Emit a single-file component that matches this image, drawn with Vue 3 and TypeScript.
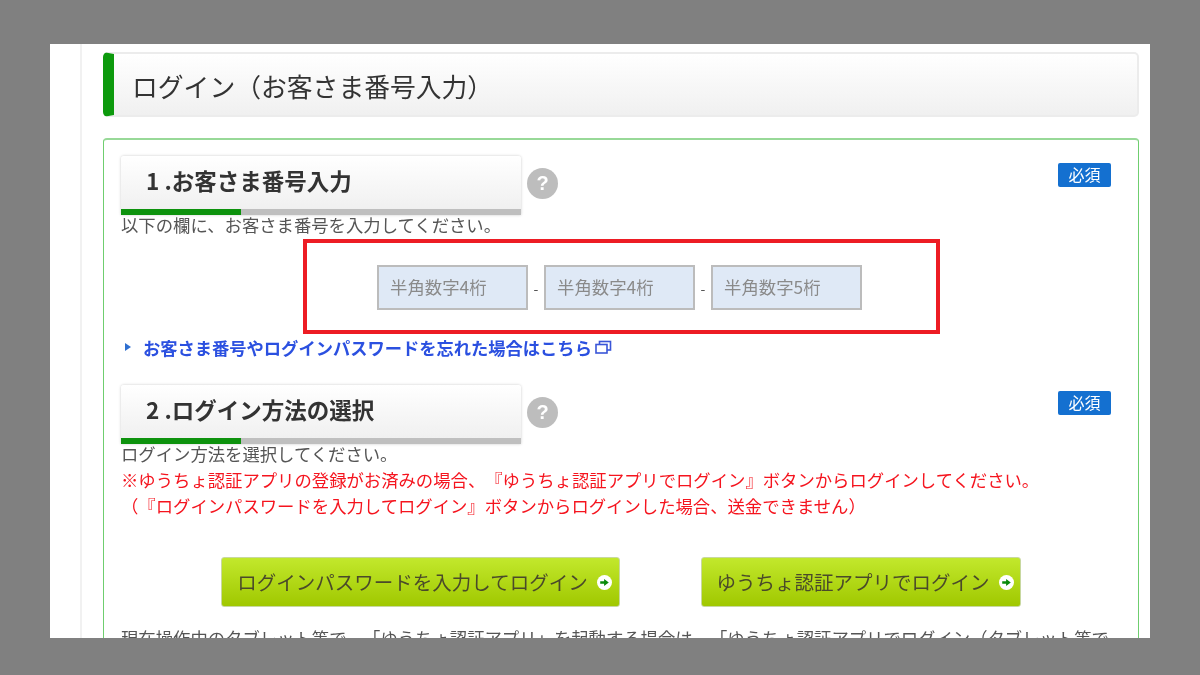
<script setup lang="ts">
interface Field { ph: string }
const fields: Field[] = [{ ph: '半角数字4桁' }, { ph: '半角数字4桁' }, { ph: '半角数字5桁' }]
</script>

<template>
  <div class="stage">
    <div class="page">
      <div class="col">
        <h1 class="title">ログイン（お客さま番号入力）</h1>
        <div class="panel">
          <div class="sec-row">
            <h2 class="sec-head"><span class="sec-text">1 .お客さま番号入力</span></h2>
            <span class="help">?</span>
            <span class="req">必須</span>
          </div>
          <p class="txt">以下の欄に、お客さま番号を入力してください。</p>
          <div class="redbox">
            <template v-for="(f, i) in fields" :key="i">
              <span v-if="i > 0" class="dash">-</span>
              <div class="field">{{ f.ph }}</div>
            </template>
          </div>
          <div class="link-row">
            <svg class="tri" width="6" height="8" viewBox="0 0 6 8"><path d="M0 0L6 4L0 8Z" fill="#2f6fd0" /></svg>
            <a class="link">お客さま番号やログインパスワードを忘れた場合はこちら</a>
            <svg class="ext" width="17" height="14" viewBox="0 0 17 14" fill="none" stroke="#3a55d8" stroke-width="1.6"><rect x="4.5" y="1.5" width="11" height="8.5" /><rect x="1" y="4.5" width="11" height="8.5" fill="#fff" /></svg>
          </div>
          <div class="sec-row second">
            <h2 class="sec-head"><span class="sec-text">2 .ログイン方法の選択</span></h2>
            <span class="help">?</span>
            <span class="req">必須</span>
          </div>
          <p class="txt">ログイン方法を選択してください。</p>
          <p class="red l1">※ゆうちょ認証アプリの登録がお済みの場合、『ゆうちょ認証アプリでログイン』ボタンからログインしてください。</p>
          <p class="red l2">（『ログインパスワードを入力してログイン』ボタンからログインした場合、送金できません）</p>
          <div class="btns">
            <button class="btn b1">ログインパスワードを入力してログイン<span class="go"><svg width="11" height="9" viewBox="0 0 11 9"><path d="M0 3H5V0L11 4.5L5 9V6H0Z" fill="#0a8a0a" /></svg></span></button>
            <button class="btn b2">ゆうちょ認証アプリでログイン<span class="go"><svg width="11" height="9" viewBox="0 0 11 9"><path d="M0 3H5V0L11 4.5L5 9V6H0Z" fill="#0a8a0a" /></svg></span></button>
          </div>
          <p class="txt foot">現在操作中のタブレット等で、「ゆうちょ認証アプリ」を起動する場合は、「ゆうちょ認証アプリでログイン（タブレット等で</p>
        </div>
      </div>
    </div>
  </div>
</template>

<style>
html, body { margin: 0; background: #808080; }
</style>

<style scoped>
.stage {
  width: 1200px;
  height: 675px;
  box-sizing: border-box;
  padding: 44px 50px 37px;
  background: #808080;
  font-family: "Noto Sans CJK JP", "Liberation Sans", sans-serif;
  text-spacing-trim: space-all;
  overflow: hidden;
}
.page {
  height: 594px;
  background: #fff;
  padding-left: 30px;
  overflow: hidden;
  filter: blur(0.55px);
}
.col {
  border-left: 2px solid #f1f1f1;
  padding: 8px 11px 0 21px;
  height: 100%;
  box-sizing: border-box;
}
.title {
  margin: 0;
  height: 65px;
  box-sizing: border-box;
  border: 2px solid #ececec;
  border-left: 11px solid #0d9a0d;
  border-radius: 5px;
  background: linear-gradient(#fff, #f0f0f0);
  padding-left: 18px;
  font-size: 25.8px;
  font-weight: 400;
  line-height: 63px;
  color: #333;
  white-space: nowrap;
}
.panel {
  margin-top: 21px;
  border: 1px solid #6fce6f;
  border-top: 2px solid #98d998;
  border-radius: 4px;
  padding: 16px 27px 0 17px;
  height: 520px;
  box-sizing: border-box;
  position: relative;
}
.sec-row {
  display: flex;
  align-items: flex-start;
}
.sec-row.second { margin-top: 25px; }
.sec-head {
  margin: 0;
  width: 400px;
  height: 59px;
  box-sizing: border-box;
  border-radius: 3px 3px 0 0;
  background: linear-gradient(#fff, #f0f0f0);
  box-shadow: 0 0 3px rgba(0, 0, 0, .22);
  border-bottom: 6px solid #bfbfbf;
  position: relative;
  padding-left: 25px;
  font-size: 22.5px;
  font-weight: 700;
  line-height: 49px;
  color: #333;
  white-space: nowrap;
}
.sec-head::after {
  content: "";
  position: absolute;
  left: 0;
  bottom: -6px;
  width: 120px;
  height: 6px;
  background: #0d920d;
}
.help {
  width: 31px;
  height: 31px;
  margin: 12px 0 0 6px;
  border-radius: 50%;
  background: #bdbdbd;
  color: #fff;
  font: 700 20px/31px "Liberation Sans", sans-serif;
  text-align: center;
}
.req {
  margin: 7px 0 0 auto;
  width: 53px;
  height: 24px;
  border-radius: 2px;
  background: #1470d0;
  color: #fff;
  font-size: 16px;
  line-height: 23px;
  text-align: center;
}
.second .req { margin-top: 6px; }
.txt, .red {
  margin: -2px 0 0;
  font-size: 17.35px;
  line-height: 23px;
  color: #555;
  white-space: nowrap;
}
.red { color: #f5141e; line-height: 26px; margin: 0; }
.l1 { margin-top: 2px; }
.redbox {
  margin: 3px 0 0 182px;
  width: 637px;
  height: 95px;
  box-sizing: border-box;
  border: 4px solid #ed1c24;
  display: flex;
  align-items: center;
  padding-left: 70px;
  padding-top: 2px;
}
.field {
  width: 151px;
  height: 45px;
  box-sizing: border-box;
  border: 2px solid #bcbcbc;
  background: #dfe9f6;
  color: #8a8a8a;
  font-size: 17.4px;
  line-height: 39px;
  padding-left: 11px;
}
.dash {
  width: 16px;
  text-align: center;
  color: #555;
  font-size: 14px;
}
.link-row {
  display: flex;
  align-items: center;
  height: 26px;
  padding-left: 4px;
}
.tri { margin-right: 12px; }
.link {
  font-size: 17.27px;
  font-weight: 700;
  color: #2b50e0;
  white-space: nowrap;
}
.ext { margin-left: 3px; }
.btns {
  display: flex;
  margin: 38px 0 0 100px;
  gap: 81px;
}
.btn {
  height: 50px;
  box-sizing: border-box;
  border: 1px solid #c8d8a0;
  border-radius: 3px;
  background: linear-gradient(#c2e82c, #a0c800);
  color: #4a4a2a;
  font: 400 19.5px/46px "Noto Sans CJK JP", sans-serif;
  display: flex;
  align-items: center;
  justify-content: center;
  padding: 0 0 0 8px;
  white-space: nowrap;
}
.b1 { width: 399px; }
.b2 { width: 320px; }
.go {
  width: 15px;
  height: 15px;
  margin-left: 9px;
  border-radius: 50%;
  background: #fff;
  display: flex;
  align-items: center;
  justify-content: center;
}
.go svg { width: 9px; height: 7px; }
.foot { margin-top: 19px; }
</style>
